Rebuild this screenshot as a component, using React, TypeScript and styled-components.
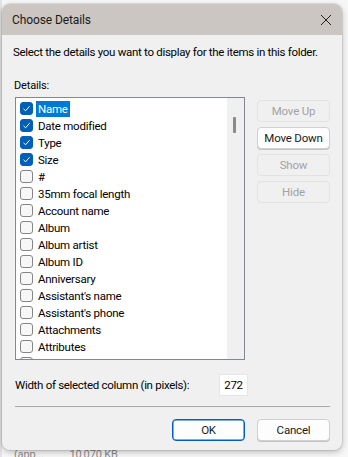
import React from "react";
import styled, { createGlobalStyle } from "styled-components";

const Global = createGlobalStyle`
  html, body { margin: 0; padding: 0; }
  body {
    background: #f2f2f2;
    font-family: Roboto, "Liberation Sans", sans-serif;
    font-size: 11px;
    letter-spacing: -0.15px;
    color: #000;
    width: 348px;
    height: 457px;
    overflow: hidden;
  }
`;

const Backdrop = styled.div`
  width: 348px;
  height: 457px;
  position: relative;
  background: linear-gradient(to right, #e3e3e3 0, #e3e3e3 2px, #f7f7f7 2px);
  overflow: hidden;
`;

const Behind = styled.div`
  position: absolute;
  left: 14px;
  top: 449px;
  font-size: 11px;
  color: #8a8a8a;
  white-space: pre;
  line-height: 12px;
`;

const Dialog = styled.div`
  position: absolute;
  left: 2px;
  top: 4px;
  width: 340px;
  height: 446px;
  background: #f0f0f0;
  border-radius: 8px;
  box-shadow: 0 2px 6px rgba(0,0,0,0.25), 0 0 0 1px rgba(0,0,0,0.08);
  display: flex;
  flex-direction: column;
  overflow: hidden;
`;

const TitleBar = styled.div`
  height: 31px;
  background: #cbc6c2;
  display: flex;
  align-items: center;
  justify-content: space-between;
  padding: 0 10px 0 10px;
  flex: none;
`;

const Title = styled.div`
  font-size: 12px;
  letter-spacing: -0.1px;
  color: #1a1a1a;
`;

const Body = styled.div`
  flex: 1;
  display: flex;
  flex-direction: column;
  padding: 0 12px 0 11px;
  & > * { flex: none; }
`;

const Intro = styled.div`
  margin-top: 9px;
  line-height: 16px;
  white-space: nowrap;
  font-size: 11.5px;
  letter-spacing: -0.3px;
`;

const Label = styled.div`
  margin-top: 18px;
  line-height: 16px;
  padding-left: 1px;
`;

const MainRow = styled.div`
  margin-top: 3px;
  display: flex;
  gap: 12px;
  align-items: flex-start;
  padding-left: 2px;
`;

const ListBox = styled.div`
  width: 231px;
  height: 263px;
  box-sizing: border-box;
  border: 1px solid #828790;
  background: #fff;
  display: flex;
  overflow: hidden;
`;

const Items = styled.div`
  flex: 1;
  padding: 2px 0 0 4px;
  overflow: hidden;
`;

const Row = styled.div`
  height: 17px;
  display: flex;
  align-items: center;
  gap: 3px;
`;

const Check = styled.span<{ $on?: boolean }>`
  width: 13px;
  height: 13px;
  box-sizing: border-box;
  border-radius: 3px;
  border: 1px solid ${(p) => (p.$on ? "#005fb8" : "#858585")};
  background: ${(p) => (p.$on ? "#005fb8" : "#f7f7f7")};
  display: inline-flex;
  align-items: center;
  justify-content: center;
  flex: none;
`;

const ItemText = styled.span<{ $sel?: boolean }>`
  line-height: 16px;
  padding: 0 2px;
  font-size: 11.5px;
  letter-spacing: -0.25px;
  background: ${(p) => (p.$sel ? "#0078d7" : "transparent")};
  color: ${(p) => (p.$sel ? "#fff" : "#000")};
  white-space: nowrap;
`;

const ScrollTrack = styled.div`
  width: 17px;
  background: #f0f0f0;
  flex: none;
  position: relative;
`;

const Thumb = styled.div`
  position: absolute;
  left: 6px;
  top: 19px;
  width: 3px;
  height: 16px;
  background: #8a8a8a;
  border-radius: 1px;
`;

const SideButtons = styled.div`
  display: flex;
  flex-direction: column;
  gap: 5px;
  padding-top: 3px;
`;

const Btn = styled.button<{ $disabled?: boolean; $primary?: boolean }>`
  width: 73px;
  height: 22px;
  box-sizing: border-box;
  font-family: inherit;
  font-size: 11.5px;
  letter-spacing: -0.2px;
  padding: 0;
  border-radius: 4px;
  background: ${(p) => (p.$disabled ? "#f0f0f0" : "#fdfdfd")};
  color: ${(p) => (p.$disabled ? "#a2a2a2" : "#1a1a1a")};
  border: 1px solid
    ${(p) => (p.$primary ? "#005fb8" : p.$disabled ? "#e2e2e2" : "#d0d0d0")};
  box-shadow: ${(p) =>
    p.$disabled ? "none" : p.$primary ? "inset 0 0 0 0.5px #005fb8" : "0 1px 0 #c4c4c4"};
`;

const WidthRow = styled.div`
  margin-top: 14px;
  display: flex;
  align-items: center;
  justify-content: space-between;
  width: 235px;
  padding-left: 2px;
  box-sizing: border-box;
  font-size: 11.5px;
  letter-spacing: -0.3px;
`;

const WidthInput = styled.div`
  width: 29px;
  height: 22px;
  box-sizing: border-box;
  background: #fff;
  border: 1px solid #e6e6e6;
  display: flex;
  align-items: center;
  justify-content: center;
`;

const Separator = styled.div`
  margin-top: 10px;
  margin-left: 2px;
  height: 1px;
  background: #a8a8a8;
  width: 315px;
`;

const Footer = styled.div`
  margin-top: 12px;
  display: flex;
  gap: 12px;
  justify-content: flex-end;
`;

const items: { name: string; on?: boolean }[] = [
  { name: "Name", on: true },
  { name: "Date modified", on: true },
  { name: "Type", on: true },
  { name: "Size", on: true },
  { name: "#" },
  { name: "35mm focal length" },
  { name: "Account name" },
  { name: "Album" },
  { name: "Album artist" },
  { name: "Album ID" },
  { name: "Anniversary" },
  { name: "Assistant's name" },
  { name: "Assistant's phone" },
  { name: "Attachments" },
  { name: "Attributes" },
  { name: "Audio format" },
];

const Tick = () => (
  <svg width="9" height="9" viewBox="0 0 9 9">
    <path d="M1.5 4.8 L3.6 6.8 L7.6 2.2" fill="none" stroke="#fff" strokeWidth="1" />
  </svg>
);

export default function App() {
  return (
    <>
      <Global />
      <Backdrop>
        <Behind>{"(app...          10,070 KB"}</Behind>
        <Dialog>
          <TitleBar>
            <Title>Choose Details</Title>
            <svg width="12" height="12" viewBox="0 0 12 12">
              <path d="M1 1 L11 11 M11 1 L1 11" stroke="#222" strokeWidth="1" />
            </svg>
          </TitleBar>
          <Body>
            <Intro>Select the details you want to display for the items in this folder.</Intro>
            <Label>Details:</Label>
            <MainRow>
              <ListBox>
                <Items>
                  {items.map((it, i) => (
                    <Row key={it.name}>
                      <Check $on={it.on}>{it.on && <Tick />}</Check>
                      <ItemText $sel={i === 0}>{it.name}</ItemText>
                    </Row>
                  ))}
                </Items>
                <ScrollTrack>
                  <Thumb />
                </ScrollTrack>
              </ListBox>
              <SideButtons>
                <Btn $disabled>Move Up</Btn>
                <Btn>Move Down</Btn>
                <Btn $disabled>Show</Btn>
                <Btn $disabled>Hide</Btn>
              </SideButtons>
            </MainRow>
            <WidthRow>
              <span>Width of selected column (in pixels):</span>
              <WidthInput>272</WidthInput>
            </WidthRow>
            <Separator />
            <Footer>
              <Btn $primary>OK</Btn>
              <Btn>Cancel</Btn>
            </Footer>
          </Body>
        </Dialog>
      </Backdrop>
    </>
  );
}
